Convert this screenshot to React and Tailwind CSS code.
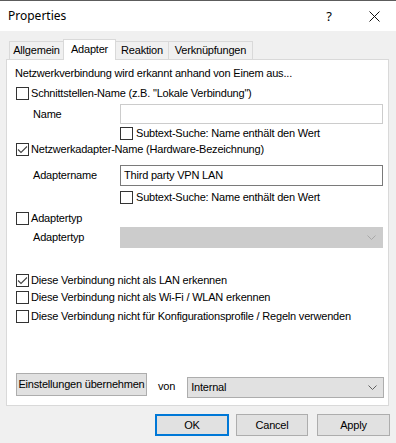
import React from "react";

function Box({ checked }) {
  return (
    <span className="w-[13px] h-[13px] border border-[#333333] bg-white flex items-center justify-center shrink-0">
      {checked && (
        <svg width="11" height="11" viewBox="0 0 11 11">
          <path d="M1 5.5 L4 8.5 L10 2.5" stroke="#444444" strokeWidth="1.1" fill="none" />
        </svg>
      )}
    </span>
  );
}

function Chevron({ color }) {
  return (
    <svg width="9" height="5" viewBox="0 0 9 5">
      <path d="M0.5 0.5 L4.5 4.5 L8.5 0.5" stroke={color} strokeWidth="1" fill="none" />
    </svg>
  );
}

function CheckRow({ checked, label, mt }) {
  return (
    <div className={`ml-[9px] flex items-center gap-[2px] h-[13px] ${mt}`}>
      <Box checked={checked} />
      <span className="leading-[13px] whitespace-nowrap">{label}</span>
    </div>
  );
}

export default function App() {
  return (
    <div className="w-[396px] h-[443px] bg-[#f0f0f0] flex flex-col text-black font-['Liberation_Sans',Arial,sans-serif] text-[11px] tracking-[-0.2px] overflow-hidden">
      {/* Title bar */}
      <div className="h-[31px] bg-white border-t border-[#5c5c5c] flex items-center shrink-0 tracking-normal">
        <span className="ml-[8px] font-['Noto_Sans',sans-serif] text-[12px] leading-[16px]">Properties</span>
        <div className="flex-1" />
        <span className="w-[46px] text-center font-['Noto_Sans',sans-serif] text-[13px] leading-[16px]">?</span>
        <span className="w-[44px] flex items-center justify-center">
          <svg width="11" height="11" viewBox="0 0 11 11">
            <path d="M0.5 0.5 L10.5 10.5 M10.5 0.5 L0.5 10.5" stroke="#111111" strokeWidth="1" fill="none" />
          </svg>
        </span>
      </div>

      {/* Tabs */}
      <div className="mt-[8px] pl-[9px] flex items-end h-[20px] relative z-10 shrink-0">
        <div className="w-[54px] h-[18px] border-l border-t border-[#d9d9d9] bg-[#f0f0f0] flex items-center justify-center leading-[13px]">Allgemein</div>
        <div className="w-[53px] h-[21px] -mb-px border-l border-t border-r border-[#d9d9d9] bg-white flex items-start justify-center pt-[3px] leading-[13px]">Adapter</div>
        <div className="w-[53px] h-[18px] border-t border-r border-[#d9d9d9] bg-[#f0f0f0] flex items-center justify-center leading-[13px]">Reaktion</div>
        <div className="w-[84px] h-[18px] border-t border-r border-[#d9d9d9] bg-[#f0f0f0] flex items-center justify-center leading-[13px]">Verknüpfungen</div>
      </div>

      {/* Panel */}
      <div className="ml-[6px] w-[383px] h-[347px] bg-white border border-[#d9d9d9] flex flex-col shrink-0">
        <div className="ml-[8px] mt-[7px] h-[13px] leading-[13px] whitespace-nowrap">
          Netzwerkverbindung wird erkannt anhand von Einem aus...
        </div>

        <CheckRow checked={false} label={'Schnittstellen-Name (z.B. "Lokale Verbindung")'} mt="mt-[7px]" />

        <div className="mt-[4px] h-[20px] flex items-center">
          <span className="ml-[26px] w-[87px] leading-[13px]">Name</span>
          <div className="w-[263px] h-[20px] border border-[#cccccc] bg-white" />
        </div>

        <div className="ml-[113px] mt-[3px] flex items-center gap-[3px] h-[13px]">
          <Box checked={false} />
          <span className="leading-[13px] whitespace-nowrap">Subtext-Suche: Name enthält den Wert</span>
        </div>

        <CheckRow checked={true} label="Netzwerkadapter-Name (Hardware-Bezeichnung)" mt="mt-[3px]" />

        <div className="mt-[9px] h-[21px] flex items-center">
          <span className="ml-[26px] w-[87px] leading-[13px]">Adaptername</span>
          <div className="w-[263px] h-[21px] border border-[#7a7a7a] bg-white flex items-center pl-[3px] leading-[13px]">
            Third party VPN LAN
          </div>
        </div>

        <div className="ml-[113px] mt-[5px] flex items-center gap-[3px] h-[13px]">
          <Box checked={false} />
          <span className="leading-[13px] whitespace-nowrap">Subtext-Suche: Name enthält den Wert</span>
        </div>

        <CheckRow checked={false} label="Adaptertyp" mt="mt-[8px]" />

        <div className="mt-[2px] h-[21px] flex items-center">
          <span className="ml-[26px] w-[87px] leading-[13px]">Adaptertyp</span>
          <div className="w-[263px] h-[21px] border border-[#cccccc] bg-[#cccccc] flex items-center justify-end pr-[6px]">
            <Chevron color="#a8a8a8" />
          </div>
        </div>

        <CheckRow checked={true} label="Diese Verbindung nicht als LAN erkennen" mt="mt-[26px]" />
        <CheckRow checked={false} label="Diese Verbindung nicht als Wi-Fi / WLAN erkennen" mt="mt-[4px]" />
        <CheckRow checked={false} label="Diese Verbindung nicht für Konfigurationsprofile / Regeln verwenden" mt="mt-[6px]" />

        <div className="mt-[50px] ml-[9px] flex items-start">
          <div className="w-[131px] h-[23px] border border-[#adadad] bg-[#e1e1e1] flex items-center justify-center leading-[13px] whitespace-nowrap">
            Einstellungen übernehmen
          </div>
          <span className="ml-[11px] mt-[7px] leading-[13px]">von</span>
          <div className="ml-[12px] mt-[4px] w-[197px] h-[21px] border border-[#adadad] bg-[#e1e1e1] flex items-center justify-between pl-[3px] pr-[6px]">
            <span className="leading-[13px]">Internal</span>
            <Chevron color="#606060" />
          </div>
        </div>
      </div>

      {/* Dialog buttons */}
      <div className="mt-[8px] flex shrink-0">
        <div className="ml-[155px] w-[74px] h-[22px] border-2 border-[#0078d7] bg-[#e1e1e1] flex items-center justify-center leading-[13px]">OK</div>
        <div className="ml-[7px] w-[72px] h-[22px] border border-[#adadad] bg-[#e1e1e1] flex items-center justify-center leading-[13px]">Cancel</div>
        <div className="ml-[9px] w-[73px] h-[22px] border border-[#adadad] bg-[#e1e1e1] flex items-center justify-center leading-[13px]">Apply</div>
      </div>
    </div>
  );
}
